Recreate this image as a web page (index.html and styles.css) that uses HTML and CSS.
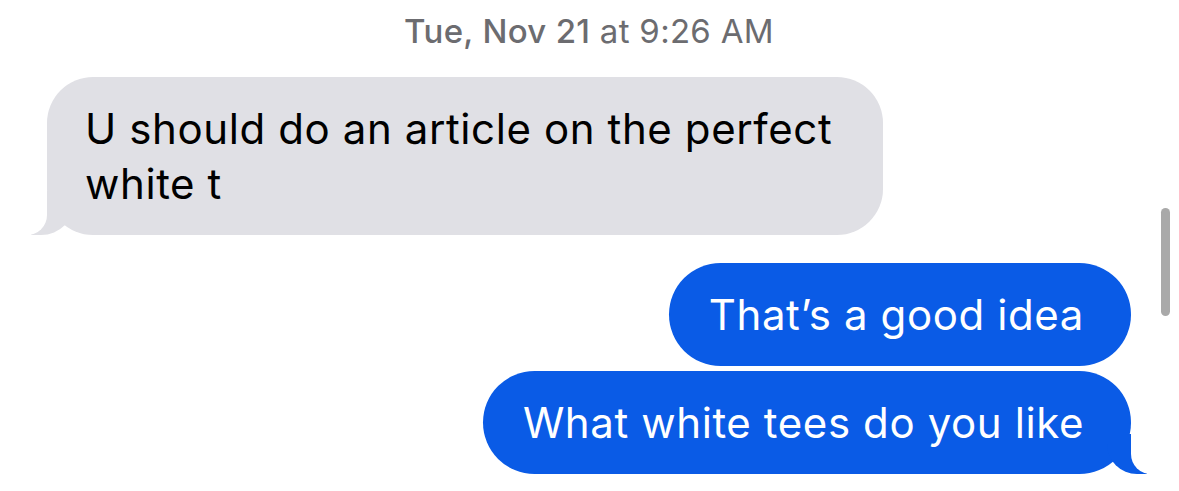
FILE: index.html
```html
<!DOCTYPE html>
<html lang="en">
<head>
<meta charset="utf-8">
<title>Messages</title>
<link rel="stylesheet" href="styles.css">
</head>
<body>
<main class="thread">
  <div class="timestamp"><span class="ts-date">Tue, Nov 21</span> at 9:26 AM</div>
  <div class="row row-in">
    <div class="bubble bubble-in">U should do an article on the perfect white t</div>
  </div>
  <div class="group-out">
    <div class="row row-out">
      <div class="bubble bubble-out">That’s a good idea</div>
    </div>
    <div class="row row-out">
      <div class="bubble bubble-out tail">What white tees do you like</div>
    </div>
  </div>
</main>
<div class="scrollbar"></div>
</body>
</html>
```
FILE: styles.css
```css
html, body {
  margin: 0;
  padding: 0;
  background: #ffffff;
}

body {
  font-family: Inter, "Noto Sans", "Liberation Sans", sans-serif;
  width: 1179px;
  height: 491px;
  overflow: hidden;
  position: relative;
}

.thread {
  display: flex;
  flex-direction: column;
  padding: 10px 48px 0 47px;
}

.timestamp {
  text-align: center;
  font-size: 33px;
  line-height: 42px;
  color: #6c6c70;
  letter-spacing: 0.3px;
}

.ts-date {
  font-weight: 500;
}

.row {
  display: flex;
}

.row-in {
  justify-content: flex-start;
  margin-top: 25px;
}

.group-out {
  display: flex;
  flex-direction: column;
  gap: 5px;
  margin-top: 28px;
}

.row-out {
  justify-content: flex-end;
}

.bubble {
  position: relative;
  font-size: 42px;
  line-height: 55px;
  padding: 24px 47px 24px 40px;
  border-radius: 52px;
  letter-spacing: 0.6px;
}

.bubble-in {
  background: #e0e0e5;
  color: #000000;
  max-width: 757px;
  padding-left: 38px;
  padding-right: 41px;
  border-radius: 46px;
}

.bubble-in::before {
  content: "";
  position: absolute;
  bottom: 0;
  left: -16px;
  width: 44px;
  height: 44px;
  background: #e0e0e5;
  border-bottom-right-radius: 34px;
}

.bubble-in::after {
  content: "";
  position: absolute;
  bottom: 0;
  left: -20px;
  width: 20px;
  height: 45px;
  background: #ffffff;
  border-bottom-right-radius: 20px;
}

.bubble-out {
  background: #0a5be6;
  color: #ffffff;
}

.tail::before {
  content: "";
  position: absolute;
  bottom: 0;
  right: -16px;
  width: 40px;
  height: 40px;
  background: #0a5be6;
  border-bottom-left-radius: 30px;
}

.tail::after {
  content: "";
  position: absolute;
  bottom: 0;
  right: -20px;
  width: 20px;
  height: 41px;
  background: #ffffff;
  border-bottom-left-radius: 20px;
}

.scrollbar {
  position: absolute;
  left: 1161px;
  top: 208px;
  width: 9px;
  height: 108px;
  border-radius: 5px;
  background: #a9a9a9;
}
```
